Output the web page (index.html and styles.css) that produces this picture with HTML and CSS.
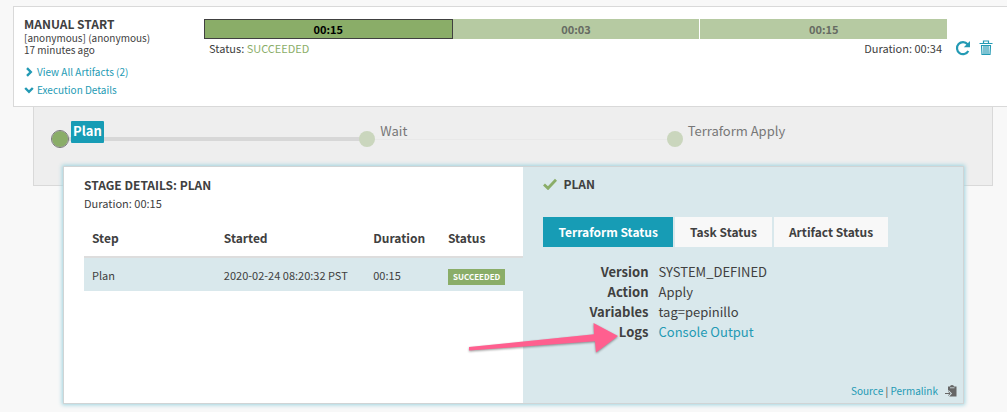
FILE: index.html
```html
<!DOCTYPE html>
<html lang="en">
<head>
<meta charset="utf-8">
<meta name="viewport" content="width=device-width, initial-scale=1">
<title>Pipeline execution</title>
<link rel="stylesheet" href="styles.css">
</head>
<body>
<main class="page">
  <section class="execution">
    <div class="summary">
      <h1 class="heading">MANUAL START</h1>
      <div class="meta">[anonymous] (anonymous)</div>
      <div class="meta">17 minutes ago</div>
      <div class="toggles">
        <button class="toggle" type="button"><svg class="chevron" viewBox="0 0 10 10" aria-hidden="true"><path d="M3 1.200 6.800 5 3 8.800"/></svg>View All Artifacts (2)</button>
        <button class="toggle" type="button"><svg class="chevron" viewBox="0 0 10 10" aria-hidden="true"><path d="M1.200 3 5 6.800 8.800 3"/></svg>Execution Details</button>
      </div>
    </div>
    <div class="progress">
      <div class="stages">
        <button class="stage stage-active" type="button">00:15</button>
        <button class="stage" type="button">00:03</button>
        <button class="stage" type="button">00:15</button>
      </div>
      <div class="result">
        <span>Status: <span class="succeeded">SUCCEEDED</span></span>
        <span>Duration: 00:34</span>
      </div>
    </div>
    <div class="actions">
      <button class="icon-button" type="button" aria-label="Restart"><svg class="icon" viewBox="0 0 16 16" aria-hidden="true"><path d="M13.300 11A6 6 0 1 1 12.600 4.300" fill="none" stroke="currentColor" stroke-width="2.200"/><path d="M15 1v6.200H8.800Z" fill="currentColor"/></svg></button>
      <button class="icon-button" type="button" aria-label="Delete"><svg class="icon" viewBox="0 0 16 16" aria-hidden="true"><path d="M1.500 3.500h13M5.500 3.200V1h5v2.200M3 5.500h10M3.500 5.500 4 14.500h8l.5-9M6 6v8M8 6v8M10 6v8" fill="none" stroke="currentColor" stroke-width="1.200"/></svg></button>
    </div>
  </section>

  <section class="graph">
    <button class="node node-active" type="button"><span class="dot"></span><span class="node-label">Plan</span></button>
    <button class="node node-next" type="button"><span class="dot"></span><span class="node-label">Wait</span></button>
    <button class="node" type="button"><span class="dot"></span><span class="node-label">Terraform Apply</span></button>
  </section>

  <section class="details">
    <div class="steps">
      <h2 class="heading">STAGE DETAILS: PLAN</h2>
      <div class="duration">Duration: 00:15</div>
      <table class="table">
        <thead><tr><th class="col-step">Step</th><th class="col-started">Started</th><th class="col-duration">Duration</th><th>Status</th></tr></thead>
        <tbody><tr><td>Plan</td><td>2020-02-24 08:20:32 PST</td><td>00:15</td><td><span class="badge">SUCCEEDED</span></td></tr></tbody>
      </table>
    </div>
    <div class="outcome">
      <h2 class="heading outcome-heading"><svg class="check" viewBox="0 0 14 12" aria-hidden="true"><path d="M1 6.500 5 10.300 13 1.700"/></svg>PLAN</h2>
      <div class="tabs">
        <button class="tab tab-active" type="button">Terraform Status</button>
        <button class="tab" type="button">Task Status</button>
        <button class="tab" type="button">Artifact Status</button>
      </div>
      <dl class="facts">
        <dt>Version</dt><dd>SYSTEM_DEFINED</dd>
        <dt>Action</dt><dd>Apply</dd>
        <dt>Variables</dt><dd>tag=pepinillo</dd>
        <dt>Logs</dt><dd><a class="link" href="#">Console Output</a></dd>
      </dl>
      <div class="footer">
        <span><a class="link" href="#">Source</a> | <a class="link" href="#">Permalink</a></span>
        <button class="copy" type="button" aria-label="Copy permalink"><svg class="copy-icon" viewBox="0 0 12 12" aria-hidden="true"><path d="M3 1.500h2Q5 0 7 0t2 1.500h2.500v10H4.200L7 8.500 4 5.500H3Z"/><path d="M0 8.500h5M3.300 6.600l2 1.900-2 1.900" fill="none" stroke="#666" stroke-width="1"/><path d="M5 2.800h4.500" stroke="#d9e8ec" stroke-width=".8"/></svg></button>
      </div>
    </div>
    <svg class="pointer" viewBox="0 0 154 36" aria-hidden="true"><path d="M3 26 128 13.200 127.500 2 152 15 130 31.500 129 20.200 3 29.500Z"/></svg>
  </section>
</main>
</body>
</html>
```
FILE: styles.css
```css
* { box-sizing: border-box; }

body {
  margin: 0;
  background: #f8f8f8;
  color: #404040;
  font-family: "Noto Sans CJK SC", "Noto Sans", sans-serif;
  font-size: 13px;
  line-height: 20px;
}

button {
  margin: 0;
  padding: 0;
  border: 0;
  background: none;
  color: inherit;
  font: inherit;
  cursor: pointer;
}

.page { padding: 6px 0 8px 13px; }

.heading {
  margin: 0;
  font-size: 12px;
  font-weight: 700;
  line-height: 15px;
}

.link { color: #239ab4; text-decoration: none; }

.execution {
  display: flex;
  padding: 9px 13px 7px 10px;
  border: 1px solid #d9d9d9;
  border-right: 0;
  background: #fff;
}

.summary { flex: 0 0 180px; }
.summary .heading { line-height: 16px; }
.meta { font-size: 10px; line-height: 12px; }

.toggles {
  display: flex;
  flex-direction: column;
  align-items: flex-start;
  margin-top: 7px;
}

.toggle {
  display: flex;
  align-items: center;
  gap: 3px;
  color: #239ab4;
  font-size: 10px;
  line-height: 18px;
}

.chevron {
  width: 10px;
  height: 10px;
  fill: none;
  stroke: currentColor;
  stroke-width: 2.4;
}

.progress { flex: 1; padding-top: 3px; }
.stages { display: flex; }

.stage {
  flex: 1;
  height: 20px;
  border-right: 1px solid #fff;
  background: #b6caa2;
  color: #666b62;
  font-size: 11px;
  font-weight: 700;
}

.stage:last-child { border-right: 0; }

.stage-active,
.stage-active:last-child {
  border: 1px solid #404040;
  background: #8aad68;
  color: #000;
  line-height: 18px;
}

.result {
  display: flex;
  justify-content: space-between;
  padding: 0 5px;
  font-size: 11px;
  line-height: 18px;
}

.succeeded { color: #8aad68; }

.actions {
  display: flex;
  gap: 7px;
  padding: 24px 0 0 8px;
  color: #239ab4;
}

.icon-button { width: 16px; height: 16px; }
.icon { display: block; width: 16px; height: 16px; }

.graph {
  display: grid;
  grid-template-columns: repeat(3, 1fr);
  height: 80px;
  margin: -1px 14px 0 20px;
  padding: 14px 18px 0 18px;
  border: 1px solid #d9d9d9;
  background: #eee;
}

.node {
  position: relative;
  display: flex;
  align-items: flex-start;
  gap: 3px;
  height: 28px;
  color: #777;
  text-align: left;
}

.dot {
  z-index: 1;
  width: 16px;
  height: 16px;
  margin-top: 10px;
  border-radius: 50%;
  background: #cad6bd;
}

.node-label {
  z-index: 1;
  padding: 0 2px 2px;
  line-height: 20px;
}

.node-active::after,
.node-next::after {
  content: "";
  position: absolute;
  top: 16px;
  left: 8px;
  width: 100%;
  height: 4px;
  background: #d7d7d7;
}

.node-next::after { top: 18px; height: 1px; background: #e8e8e8; }
.node-active .dot { outline: 1px solid #777; background: #8aad68; }

.node-active .node-label {
  border-radius: 1px;
  background: #179cb5;
  color: #fff;
  font-weight: 700;
}

.details {
  position: relative;
  display: grid;
  grid-template-columns: 460fr 440fr;
  min-height: 238px;
  margin: -20px 43px 0 50px;
  border: 1px solid #d0d4d5;
  background: #fff;
  box-shadow: 0 0 4px 1px #9fd4df;
}

.steps { padding: 10px 0 0 20px; }
.duration { margin-top: 1px; font-size: 11px; }

.table {
  width: 100%;
  margin-top: 6px;
  border-collapse: collapse;
  table-layout: fixed;
}

.table th { padding: 9px 0 8px 8px; border-bottom: 2px solid #ddd; font-size: 12px; font-weight: 700; text-align: left; }
.table td { height: 34px; padding: 0 0 0 8px; background: #d9e8ec; font-size: 11px; white-space: nowrap; }
.col-step { width: 30%; }
.col-started { width: 34%; }
.col-duration { width: 17%; }

.badge {
  display: inline-block;
  padding: 0 5px;
  background: #8aad68;
  color: #fff;
  font-size: 8px;
  font-weight: 700;
  line-height: 16px;
  vertical-align: middle;
}

.outcome {
  display: flex;
  flex-direction: column;
  padding: 9px 6px 2px 20px;
  background: #d9e8ec;
}

.outcome-heading { display: flex; align-items: center; gap: 6px; }

.check {
  width: 14px;
  height: 12px;
  fill: none;
  stroke: #8aad68;
  stroke-width: 2.8;
}

.tabs { display: flex; gap: 2px; margin-top: 26px; }

.tab {
  height: 30px;
  padding: 0 15px;
  background: #f8f8f8;
  font-size: 12px;
  font-weight: 700;
}

.tab-active { background: #179cb5; color: #fff; }

.facts {
  display: grid;
  grid-template-columns: 105px 1fr;
  column-gap: 10px;
  margin: 15px 0 0;
}

.facts dt { font-weight: 700; text-align: right; }
.facts dd { margin: 0; }

.footer {
  display: flex;
  align-items: center;
  justify-content: flex-end;
  gap: 7px;
  margin-top: auto;
  font-size: 10px;
}

.copy { width: 12px; height: 12px; }
.copy-icon { display: block; width: 12px; height: 12px; fill: #666; }

.pointer {
  position: absolute;
  top: 154px;
  left: 402px;
  width: 154px;
  height: 36px;
  fill: #ff5f8f;
  filter: drop-shadow(0 1px 1px #0006);
}
```
